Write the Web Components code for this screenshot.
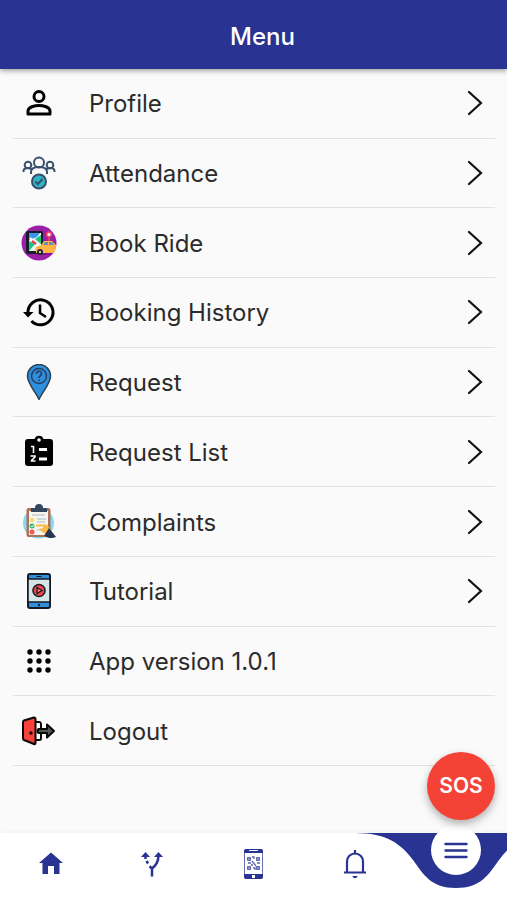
<!DOCTYPE html>
<html lang="en">
<head>
<meta charset="utf-8">
<meta name="viewport" content="width=device-width, initial-scale=1">
<title>Menu</title>
<style>
  html, body { margin: 0; }
  body {
    --brand: #283392;
    --line: #e2e2e2;
    min-height: 100vh;
    display: flex;
    flex-direction: column;
    background: #fafafa;
    color: #2b2b2b;
    font-family: Inter, "Liberation Sans", sans-serif;
  }
</style>
</head>
<body>
<app-bar>Menu</app-bar>
<menu-list>
  <menu-item href="#profile">
    <svg slot="icon" viewBox="0 0 36 36" fill="none" stroke="#000" stroke-width="3"><circle cx="18" cy="11.500" r="5"/><path d="M7 29v-3c0-4 7-5.500 11-5.500s11 1.500 11 5.500v3z" stroke-linejoin="round"/></svg>
    Profile</menu-item>
  <menu-item href="#attendance">
    <svg slot="icon" viewBox="0 0 36 36" fill="none" stroke="#38506e" stroke-width="2"><circle cx="18" cy="7.500" r="5"/><circle cx="7" cy="10" r="3.300"/><circle cx="29" cy="10" r="3.300"/><path d="M2.500 17v-1c0-2 2-3 4.500-3 1.500 0 3 .500 4 2M33.500 17v-1c0-2-2-3-4.500-3-1.500 0-3 .500-4 2M10 19v-2c0-3 3-5 8-5s8 2 8 5v2"/><circle cx="18" cy="26.500" r="7" fill="#2fb3c3"/><path d="M14.500 26.500l2.500 2.500 4.500-5"/></svg>
    Attendance</menu-item>
  <menu-item href="#book-ride">
    <svg slot="icon" viewBox="0 0 36 36"><circle cx="18" cy="18" r="17.500" fill="#9c1fa8"/><path d="M19 24c7-3 10-7 15-7 1 5-1 10-5 13H16z" fill="#7b168e"/><rect x="5" y="6" width="17" height="23" rx="2" fill="#171c2b"/><path d="M8 8h12v18H8z" fill="#eef4ee"/><path d="M8 8h11l-3 4-8 3z" fill="#3c95e8"/><path d="M8 16l6 3-6 7z" fill="#18c783"/><path d="M14 14l6-4v9z" fill="#1ac584"/><path d="M14 25l5-5 1 6z" fill="#18c783"/><path d="M9 13l11 10" stroke="#fff" stroke-width="2"/><path d="M11 16l4 3" stroke="#ef3d50" stroke-width="2.500"/><path d="M15 28v-6l5-2 3-4h8l4 4c0 3-1 6-2 8z" fill="#ffb545"/><path d="M22 20l2-3h3v3zM28 17h3l2 3h-5z" fill="#5d91b5"/><circle cx="19" cy="27" r="3" fill="#252530"/><circle cx="19" cy="27" r="1" fill="#fff"/><path d="M27.200 16v-3.500a3.200 3.200 0 1 1 1.600 0V16z" fill="#f04461"/><circle cx="28" cy="9.500" r="1.500" fill="#fff"/></svg>
    Book Ride</menu-item>
  <menu-item href="#booking-history">
    <svg slot="icon" viewBox="0 0 36 36" fill="none" stroke="#000" stroke-width="3"><path d="M7 18A12.500 12.500 0 1 1 10.500 27"/><path d="M2 18h10.500L7 23.500z" fill="#000" stroke="none"/><path d="M19 10.500V19l6 4" stroke-width="2.500"/></svg>
    Booking History</menu-item>
  <menu-item href="#request">
    <svg slot="icon" viewBox="0 0 36 36"><path d="M18 35.500C15 28 6.500 20 6.500 12a11.500 11.500 0 0 1 23 0C29.500 20 21 28 18 35.500z" fill="#2f8fdf" stroke="#303e4f" stroke-width="1.500"/><circle cx="18" cy="12" r="7.500" fill="#2f8fdf" stroke="#263f60" stroke-width="1.500"/><path d="M15.500 10c0-4 5.500-3.500 5 0-.500 2-2.500 2-2.500 4M18 15.500v1.500" fill="none" stroke="#263f60" stroke-width="1.600"/></svg>
    Request</menu-item>
  <menu-item href="#request-list">
    <svg slot="icon" viewBox="0 0 36 36"><path d="M7 5h6.500a4.700 4.700 0 0 1 9 0H29a3 3 0 0 1 3 3v21a3 3 0 0 1-3 3H7a3 3 0 0 1-3-3V8a3 3 0 0 1 3-3z"/><circle cx="18" cy="6" r="1.800" fill="#fff"/><path d="M10 12.500h2.500V19M9.500 22H14v1l-3.500 3.500v.500h4" fill="none" stroke="#fff" stroke-width="1.600"/><path d="M18 15.500h8M18 25h8" stroke="#fff" stroke-width="3"/></svg>
    Request List</menu-item>
  <menu-item href="#complaints">
    <svg slot="icon" viewBox="0 0 36 36"><circle cx="17.500" cy="19" r="15.500" fill="#86d9f2"/><rect x="5.500" y="4" width="24" height="29" rx="2" fill="#ad735a"/><path d="M8 7h19v24H8z" fill="#f7f5ef"/><path d="M10 4h4a4 4 0 0 1 8 0h4v4H10z" fill="#34455e"/><path d="M11 11h13M16 15h9M16 18h8M16 26h6" stroke="#c5cbd1" stroke-width="1.400"/><circle cx="11" cy="16" r="2.300" fill="#f8dd74"/><circle cx="11" cy="22" r="2.500" fill="#38b76b"/><circle cx="11" cy="28" r="2.500" fill="#ef5b51"/><path d="M15 20.500h11l4 6-4 4c-3-1-6-3-8-6h4v-2h-7z" fill="#ffba42"/><path d="M28 24l7 9c-4 2-8 1-12-1z" fill="#263650"/><path d="M9.800 22l1 1 2-2" stroke="#fff" fill="none"/></svg>
    Complaints</menu-item>
  <menu-item href="#tutorial">
    <svg slot="icon" viewBox="0 0 36 36"><rect x="7" y="1" width="22" height="34" rx="2" fill="#318fdc" stroke="#151a25" stroke-width="2"/><path d="M7 6h22v23H7z" fill="#d6e5e8" stroke="#151a25" stroke-width="1.500"/><path d="M15.500 3.500h5" stroke="#151a25"/><circle cx="18" cy="32" r="1.200" fill="#151a25"/><circle cx="18" cy="17.500" r="6" fill="#f1484b" stroke="#201d26" stroke-width="1.600"/><path d="M16 14.500l5 3-5 3z" fill="#f77" stroke="#201d26" stroke-width="1.400"/></svg>
    Tutorial</menu-item>
  <menu-item>
    <svg slot="icon" viewBox="0 0 36 36"><circle cx="9" cy="9" r="2.700"/><circle cx="18" cy="9" r="2.700"/><circle cx="27" cy="9" r="2.700"/><circle cx="9" cy="18" r="2.700"/><circle cx="18" cy="18" r="2.700"/><circle cx="27" cy="18" r="2.700"/><circle cx="9" cy="27" r="2.700"/><circle cx="18" cy="27" r="2.700"/><circle cx="27" cy="27" r="2.700"/></svg>
    App version 1.0.1</menu-item>
  <menu-item href="#logout" plain>
    <svg slot="icon" viewBox="0 0 36 36" stroke="#080808" stroke-width="2" stroke-linejoin="round"><path d="M14 9h4c2 0 2 1 2 3v12c0 3 0 3-2 3h-4" fill="#fff"/><path d="M3 7.500l10-3c1 0 1.500.500 1.500 1.500v24c0 1-.500 1.500-1.500 1l-10-4c-.700-.300-1-.500-1-1.500V9c0-1 .500-1.300 1-1.500z" fill="#f7413b"/><path d="M18 16h8v-4.500l7 6.500-7 6.500V20h-8c-2 0-2-4 0-4z" fill="#555"/><circle cx="10" cy="20" r=".700"/></svg>
    Logout</menu-item>
</menu-list>
<bottom-nav>
  <sos-button slot="action">SOS</sos-button>
  <nav-item href="#home" label="Home">
    <svg viewBox="0 0 32 32" fill="#283392"><path d="M16 4.500L28 15h-3.500v11H19v-8h-6v8H7.500V15H4z"/></svg>
  </nav-item>
  <nav-item href="#routes" label="Routes">
    <svg viewBox="0 0 32 32" fill="none" stroke="#283392" stroke-width="2.500"><path d="M16 28.500V20M16 20.500C20 17 22.500 14 22.500 7M16 20.500l-2.500-2.200M12 15.500l-1.500-2.500M9.500 11V7"/><path d="M5 9L9.500 4 14 9zM18 9l4.500-5L27 9z" fill="#283392" stroke="none"/></svg>
  </nav-item>
  <nav-item href="#scan" label="Scan code">
    <svg viewBox="0 0 32 32"><rect x="7.500" y="1.500" width="18" height="29" rx="2" fill="#fff" stroke="#6770b5"/><path d="M7 5V3a2 2 0 0 1 2-2h15a2 2 0 0 1 2 2v2zM7 26h19v3a2 2 0 0 1-2 2H9a2 2 0 0 1-2-2z" fill="#283392"/><path d="M12 2.500h9" stroke="#fff"/><path d="M15 27h3v3h-3z" fill="#fff"/><g fill="#8d94ca" stroke="#5963ae"><path d="M10.500 9.500h3v3h-3zM19.500 9.500h3v3h-3zM10.500 18.500h3v3h-3zM19.500 18.500h3v3h-3z"/></g><path d="M15 9h2v2M15 13l4 5M11 15h3M20 15h3M16 20h2v2M14 17h2" fill="none" stroke="#5963ae" stroke-width="1.300"/></svg>
  </nav-item>
  <nav-item href="#alerts" label="Notifications">
    <svg viewBox="0 0 32 32" fill="none" stroke="#283392" stroke-width="2.200"><path d="M5 24.500h22M8 24V13.500a8 8 0 0 1 16 0V24M16 5.500V2"/><path d="M13.500 28h5c-.500 3-4.500 3-5 0z" fill="#283392" stroke="none"/></svg>
  </nav-item>
  <nav-item href="#menu" label="Menu" current>
    <svg viewBox="0 0 32 32" stroke="#283392" stroke-width="2.400" stroke-linecap="round"><path d="M5.500 10h21M5.500 16.500h21M5.500 23h21"/></svg>
  </nav-item>
</bottom-nav>

<script>
const define = (name, render) => customElements.define(name, class extends HTMLElement {
  connectedCallback() {
    if (!this.shadowRoot) this.attachShadow({ mode: "open" }).innerHTML = render(this);
  }
});

define("app-bar", () => `
  <style>
    :host { display: block; position: relative; z-index: 1; background: var(--brand); color: #fff; box-shadow: 0 2px 5px rgba(0,0,0,.35); }
    h1 { margin: 0; padding: 21px 0 16px 18px; font-size: 24px; line-height: 32px; font-weight: 500; text-align: center; }
  </style>
  <header><h1><slot></slot></h1></header>`);

define("menu-list", () => `
  <style>
    :host { flex: 1; display: grid; padding: 0 12px 67px 13px; }
    div { display: grid; grid-auto-rows: 1fr; }
  </style>
  <div role="list"><slot></slot></div>`);

define("menu-item", el => {
  const href = el.getAttribute("href");
  const tag = href ? "a" : "div";
  const chevron = href && !el.hasAttribute("plain")
    ? `<svg class="chevron" viewBox="0 0 16 26" aria-hidden="true"><path d="M2 2l12 11L2 24" fill="none" stroke="#111" stroke-width="2.200" stroke-linecap="round"/></svg>` : "";
  el.setAttribute("role", "listitem");
  return `
  <style>
    :host { display: grid; border-bottom: 1px solid var(--line); }
    .row { display: flex; align-items: center; color: inherit; text-decoration: none; padding: 0 12px 0 8px; }
    .text { flex: 1; margin-left: 32px; padding-top: 2px; font-size: 24px; line-height: 32px; }
    ::slotted(svg) { display: block; flex: none; width: 36px; height: 36px; }
    .chevron { flex: none; width: 16px; height: 26px; }
  </style>
  <${tag} class="row" ${href ? `href="${href}"` : ""}><slot name="icon"></slot><span class="text"><slot></slot></span>${chevron}</${tag}>`;
});

define("sos-button", () => `
  <style>
    :host { display: block; }
    button { display: block; width: 68px; height: 68px; padding: 0; border: 0; border-radius: 50%; background: #f44336; color: #fff; font: 600 21px/24px Inter, "Liberation Sans", sans-serif; box-shadow: 0 4px 8px rgba(0,0,0,.3); }
  </style>
  <button type="button"><slot></slot></button>`);

define("bottom-nav", () => `
  <style>
    :host { display: block; position: relative; background: #fff; box-shadow: 0 -1px 4px rgba(0,0,0,.04); }
    nav { display: grid; grid-template-columns: repeat(5, 1fr); height: 67px; overflow-x: clip; }
    .action { position: absolute; right: 12px; bottom: 80px; }
  </style>
  <nav aria-label="Main"><slot></slot></nav>
  <div class="action"><slot name="action"></slot></div>`);

define("nav-item", el => {
  const current = el.hasAttribute("current");
  return `
  <style>
    :host { display: grid; position: relative; }
    a { display: grid; place-items: center; padding-bottom: 6px; }
    ::slotted(svg) { display: block; width: 32px; height: 32px; }
    .wave { position: absolute; top: 0; left: 50%; width: 202px; height: 55px; transform: translateX(-50%); }
    .current { position: absolute; left: 50%; top: -8px; width: 50px; height: 50px; padding: 0; border-radius: 50%; background: #fff; transform: translateX(-50%); }
  </style>
  ${current ? `<svg class="wave" viewBox="0 0 202 55" aria-hidden="true"><path d="M0 0C32 0 46 11 58 27C69 42 76 55 101 55S133 42 144 27C156 11 170 0 202 0Z" fill="#283392"/></svg>` : ""}
  <a class="${current ? "current" : ""}" href="${el.getAttribute("href")}" aria-label="${el.getAttribute("label")}" ${current ? 'aria-current="page"' : ""}><slot></slot></a>`;
});
</script>
</body>
</html>
